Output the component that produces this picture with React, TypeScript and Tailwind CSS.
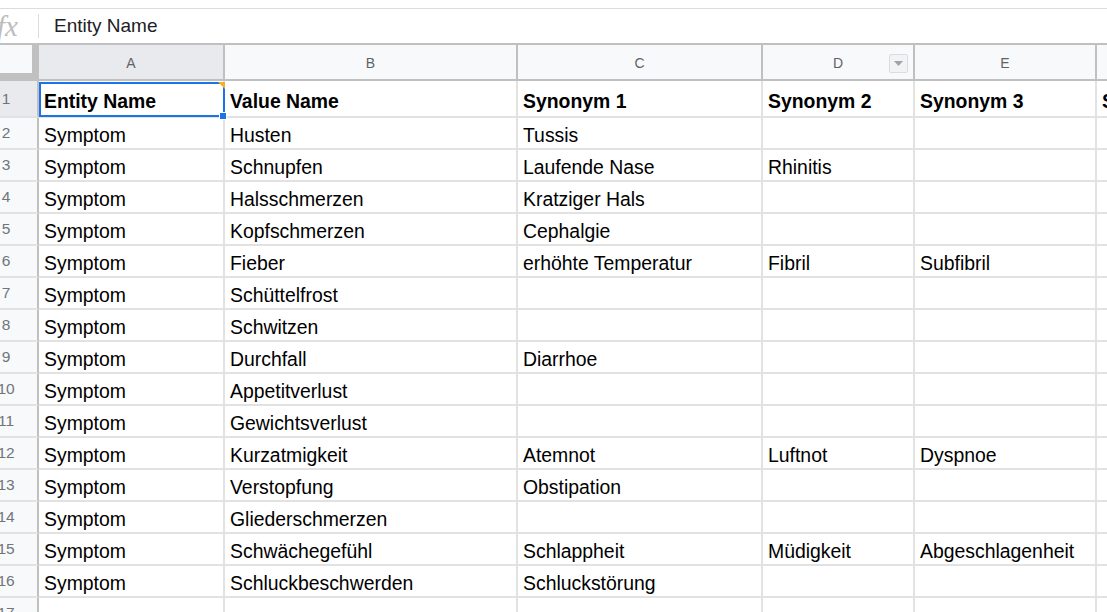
import React from "react";

const COLS = [
  { key: "A", w: "w-[186px]" },
  { key: "B", w: "w-[293px]" },
  { key: "C", w: "w-[245px]" },
  { key: "D", w: "w-[152px]" },
  { key: "E", w: "w-[182px]" },
  { key: "F", w: "w-[220px]" },
];

const header = ["Entity Name", "Value Name", "Synonym 1", "Synonym 2", "Synonym 3", "Synonym 4"];

const data: string[][] = [
  ["Symptom", "Husten", "Tussis", "", ""],
  ["Symptom", "Schnupfen", "Laufende Nase", "Rhinitis", ""],
  ["Symptom", "Halsschmerzen", "Kratziger Hals", "", ""],
  ["Symptom", "Kopfschmerzen", "Cephalgie", "", ""],
  ["Symptom", "Fieber", "erhöhte Temperatur", "Fibril", "Subfibril"],
  ["Symptom", "Schüttelfrost", "", "", ""],
  ["Symptom", "Schwitzen", "", "", ""],
  ["Symptom", "Durchfall", "Diarrhoe", "", ""],
  ["Symptom", "Appetitverlust", "", "", ""],
  ["Symptom", "Gewichtsverlust", "", "", ""],
  ["Symptom", "Kurzatmigkeit", "Atemnot", "Luftnot", "Dyspnoe"],
  ["Symptom", "Verstopfung", "Obstipation", "", ""],
  ["Symptom", "Gliederschmerzen", "", "", ""],
  ["Symptom", "Schwächegefühl", "Schlappheit", "Müdigkeit", "Abgeschlagenheit"],
  ["Symptom", "Schluckbeschwerden", "Schluckstörung", "", ""],
  ["", "", "", "", ""],
];

function RowHead({ n, selected, h }: { n: number; selected?: boolean; h: string }) {
  return (
    <div
      className={`${h} w-[39px] shrink-0 overflow-hidden border-r-2 border-b-2 border-r-[#c0c0c0] border-b-[#e2e2e2] flex items-center ${
        selected ? "bg-[#e8eaed]" : "bg-[#f8f9fa]"
      }`}
    >
      <div className="w-[52px] ml-[-20px] shrink-0 text-center text-[15.5px] text-[#70757a]">{n}</div>
    </div>
  );
}

export default function App() {
  return (
    <div
      className="w-[1107px] h-[612px] overflow-hidden bg-white text-black"
      style={{ fontFamily: '"Liberation Sans", Arial, sans-serif' }}
    >
      {/* formula bar */}
      <div className="pt-[8px]">
        <div className="h-[37px] border-t border-b-2 border-t-[#dadce0] border-b-[#c0c0c0] flex items-center">
          <div className="w-[38px] shrink-0 overflow-hidden h-full flex items-center">
            <span
              className="ml-[-3px] text-[29px] italic text-[#bdbdbd] leading-none"
              style={{ fontFamily: '"Liberation Serif", "DejaVu Serif", serif' }}
            >
              fx
            </span>
          </div>
          <div className="w-px h-[24px] bg-[#dadce0] shrink-0" />
          <div className="pl-[15px] text-[19px] text-[#202124] whitespace-nowrap">Entity Name</div>
        </div>
      </div>

      {/* column headers */}
      <div className="flex h-[36px]">
        <div className="w-[39px] shrink-0 h-full bg-[#f8f9fa] border-r-[7px] border-b-[8px] border-[#c0c0c0]" />
        {COLS.map((c) => (
          <div
            key={c.key}
            className={`${c.w} relative shrink-0 h-full border-r-2 border-b-2 border-[#c0c0c0] flex items-center justify-center pt-[2px] text-[14px] text-[#5f6368] ${
              c.key === "A" ? "bg-[#e8eaed]" : "bg-[#f8f9fa]"
            }`}
          >
            {c.key}
            {c.key === "D" && (
              <div className="absolute right-[5px] top-[9px] w-[19px] h-[19px] border border-[#dadce0] bg-[#f1f3f4] rounded-[2px] flex items-center justify-center">
                <svg width="9" height="6" viewBox="0 0 9 6">
                  <path d="M0 0 L9 0 L4.5 5 Z" fill="#a0a4a8" />
                </svg>
              </div>
            )}
          </div>
        ))}
      </div>

      {/* row 1 */}
      <div className="flex h-[37px] relative z-10">
        <RowHead n={1} selected h="h-[37px]" />
        {COLS.map((c, i) => (
          <div
            key={c.key}
            className={`${c.w} shrink-0 h-full border-r-2 border-b-2 border-[#e2e2e2] flex items-end pb-[4px] pl-[5px] text-[19.4px] leading-[22px] font-bold whitespace-nowrap ${
              i === 0 ? "relative" : "overflow-hidden"
            }`}
          >
            {header[i]}
            {i === 0 && (
              <>
                <div className="absolute left-0 right-[-2px] top-[1px] bottom-[-1px] border-2 border-[#1a73e8]" />
                <svg className="absolute right-[-2px] top-[1px]" width="7" height="7" viewBox="0 0 7 7">
                  <path d="M0 0 L7 0 L7 7 Z" fill="#f6b026" />
                </svg>
                <div className="absolute right-[-4px] bottom-[-4px] w-[8px] h-[8px] bg-[#1a73e8] border border-white" />
              </>
            )}
          </div>
        ))}
      </div>

      {/* data rows */}
      {data.map((row, r) => (
        <div key={r} className="flex h-[32px]">
          <RowHead n={r + 2} h="h-[32px]" />
          {COLS.map((c, i) => (
            <div
              key={c.key}
              className={`${c.w} shrink-0 h-full overflow-hidden border-r-2 border-b-2 border-[#e2e2e2] flex items-end pb-[2px] pl-[5px] text-[19.4px] leading-[22px] whitespace-nowrap`}
            >
              {row[i] ?? ""}
            </div>
          ))}
        </div>
      ))}
    </div>
  );
}
